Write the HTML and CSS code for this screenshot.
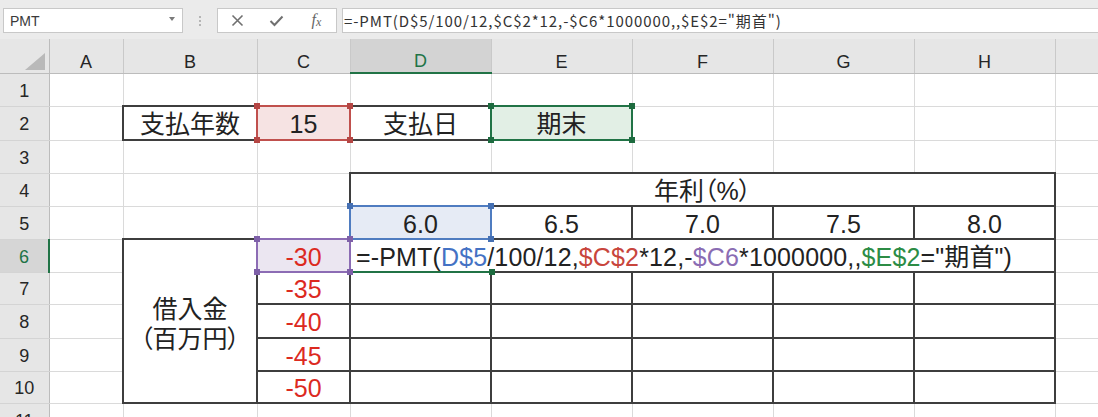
FILE: index.html
```html
<!DOCTYPE html>
<html lang="ja">
<head>
<meta charset="utf-8">
<title>PMT</title>
<link rel="stylesheet" href="styles.css">
</head>
<body>
<div class="app">
  <div class="toolbar">
    <div class="namebox"><span>PMT</span><span class="dd"></span></div>
    <div class="grip"><i></i><i></i><i></i></div>
    <div class="fbtns">
      <span class="slot"><svg width="13" height="13" viewBox="0 0 13 13"><path d="M1.5 1.5 L11.5 11.5 M11.5 1.5 L1.5 11.5" stroke="#707070" stroke-width="1.6" fill="none"/></svg></span>
      <span class="slot"><svg width="15" height="12" viewBox="0 0 15 12"><path d="M1.5 6 L5.5 10 L13.5 1.5" stroke="#707070" stroke-width="2" fill="none"/></svg></span>
      <span class="slot fx">f<span class="fxs">x</span></span>
    </div>
    <div class="finput">=-PMT(D$5/100/12,$C$2*12,-$C6*1000000,,$E$2="期首")</div>
  </div>
  <div class="sheet">
    <table class="grid">
      <colgroup>
        <col class="w-rh"><col class="w-a"><col class="w-b"><col class="w-c">
        <col class="w-d"><col class="w-d"><col class="w-d"><col class="w-d"><col class="w-d"><col class="w-d">
      </colgroup>
      <tr class="hdr">
        <th class="corner"><span class="tri"></span></th>
        <th class="ch">A</th><th class="ch">B</th><th class="ch">C</th><th class="ch sel">D</th>
        <th class="ch">E</th><th class="ch">F</th><th class="ch">G</th><th class="ch">H</th><th class="ch"></th>
      </tr>
      <tr class="r1">
        <th class="rh">1</th><td></td><td></td><td></td><td></td><td></td><td></td><td></td><td></td><td></td>
      </tr>
      <tr class="r2">
        <th class="rh">2</th><td></td>
        <td class="bx">支払年数</td>
        <td class="bx f-red">15</td>
        <td class="bx">支払日</td>
        <td class="bx f-green">期末</td>
        <td></td><td></td><td></td><td></td>
      </tr>
      <tr class="r3">
        <th class="rh">3</th><td></td><td></td><td></td><td></td><td></td><td></td><td></td><td></td><td></td>
      </tr>
      <tr class="r4">
        <th class="rh">4</th><td></td><td></td><td></td>
        <td class="bx pal" colspan="5">年利（%）</td>
        <td></td>
      </tr>
      <tr class="r5">
        <th class="rh">5</th><td></td><td></td><td></td>
        <td class="bx f-blue">6.0</td><td class="bx">6.5</td><td class="bx">7.0</td><td class="bx">7.5</td><td class="bx">8.0</td>
        <td></td>
      </tr>
      <tr class="r6">
        <th class="rh sel">6</th><td></td>
        <td class="bx pal merged" rowspan="5">借入金<br>（百万円）</td>
        <td class="bx neg f-purple">-30</td>
        <td class="bx edit" colspan="5">=-PMT(<span class="rb">D$5</span>/100/12,<span class="rr">$C$2</span>*12,-<span class="rp">$C6</span>*1000000,,<span class="rg">$E$2</span>="期首")</td>
        <td></td>
      </tr>
      <tr class="r7">
        <th class="rh">7</th><td></td>
        <td class="bx neg">-35</td>
        <td class="bx"></td><td class="bx"></td><td class="bx"></td><td class="bx"></td><td class="bx"></td>
        <td></td>
      </tr>
      <tr class="r8">
        <th class="rh">8</th><td></td>
        <td class="bx neg">-40</td>
        <td class="bx"></td><td class="bx"></td><td class="bx"></td><td class="bx"></td><td class="bx"></td>
        <td></td>
      </tr>
      <tr class="r9">
        <th class="rh">9</th><td></td>
        <td class="bx neg">-45</td>
        <td class="bx"></td><td class="bx"></td><td class="bx"></td><td class="bx"></td><td class="bx"></td>
        <td></td>
      </tr>
      <tr class="r10">
        <th class="rh">10</th><td></td>
        <td class="bx neg">-50</td>
        <td class="bx"></td><td class="bx"></td><td class="bx"></td><td class="bx"></td><td class="bx"></td>
        <td></td>
      </tr>
      <tr class="r11">
        <th class="rh">11</th><td></td><td></td><td></td><td></td><td></td><td></td><td></td><td></td><td></td>
      </tr>
    </table>

    <div class="ref active"><i class="h br"></i></div>
    <div class="ref red sel-c2"><i class="h tl"></i><i class="h tr"></i><i class="h bl"></i><i class="h br"></i></div>
    <div class="ref green sel-e2"><i class="h tl"></i><i class="h tr"></i><i class="h bl"></i><i class="h br"></i></div>
    <div class="ref blue sel-d5"><i class="h tl"></i><i class="h tr"></i><i class="h bl"></i><i class="h br"></i></div>
    <div class="ref purple sel-c6"><i class="h tl"></i><i class="h tr"></i><i class="h bl"></i><i class="h br"></i></div>
  </div>
</div>
</body>
</html>
```
FILE: styles.css
```css
html, body {
  margin: 0;
  padding: 0;
  background: #ffffff;
  overflow: hidden;
}
.app {
  width: 1098px;
  height: 417px;
  overflow: hidden;
  font-family: "Liberation Sans", "Noto Sans CJK JP", sans-serif;
}

/* ---------- formula bar ---------- */
.toolbar {
  height: 39px;
  box-sizing: border-box;
  padding-top: 8px;
  background: #ebebeb;
  display: flex;
  align-items: flex-start;
}
.namebox {
  margin-left: 3px;
  width: 180px;
  height: 25px;
  box-sizing: border-box;
  border: 1px solid #c8c8c8;
  background: #fff;
  display: flex;
  align-items: center;
  justify-content: space-between;
  padding: 0 7px 0 6px;
  font-size: 14px;
  color: #3a3a3a;
}
.dd {
  width: 0;
  height: 0;
  border-left: 3.5px solid transparent;
  border-right: 3.5px solid transparent;
  border-top: 4px solid #7a7a7a;
  margin-top: -4px;
}
.grip {
  width: 34px;
  height: 25px;
  display: flex;
  flex-direction: column;
  align-items: center;
  justify-content: center;
  gap: 2px;
}
.grip i {
  display: block;
  width: 2px;
  height: 2px;
  background: #b5b5b5;
}
.fbtns {
  width: 120px;
  height: 25px;
  box-sizing: border-box;
  border: 1px solid #c8c8c8;
  background: #fff;
  display: flex;
  align-items: center;
}
.slot {
  width: 40px;
  height: 23px;
  display: flex;
  align-items: center;
  justify-content: center;
}
.fx {
  font-family: "Liberation Serif", serif;
  font-style: italic;
  font-size: 16px;
  color: #666;
  padding-bottom: 2px;
  box-sizing: border-box;
}
.fxs {
  font-size: 12px;
  margin-top: 5px;
}
.finput {
  margin-left: 5px;
  flex: 1;
  height: 25px;
  box-sizing: border-box;
  border: 1px solid #c8c8c8;
  border-right: none;
  background: #fff;
  padding-left: 1px;
  font-family: "Noto Sans CJK JP", sans-serif;
  font-size: 15px;
  line-height: 23px;
  color: #333;
  white-space: nowrap;
  overflow: hidden;
  letter-spacing: 0.92px;
}

/* ---------- sheet ---------- */
.sheet {
  position: relative;
}
.grid {
  border-collapse: collapse;
  table-layout: fixed;
  width: 1195px;
}
.w-rh { width: 49px; }
.w-a { width: 74px; }
.w-b { width: 134px; }
.w-c { width: 93px; }
.w-d { width: 141px; }

.grid td, .grid th {
  padding: 2px 0 0;
  text-align: center;
  vertical-align: middle;
  white-space: nowrap;
  overflow: visible;
}
.grid td {
  border: 1px solid #dadada;
  font-size: 25px;
  line-height: 26px;
  color: #222;
}
.hdr { height: 34px; }
.r1 { height: 33px; }
.r2 { height: 34px; }
.r3 { height: 33px; }
.r4 { height: 33px; }
.r5 { height: 33px; }
.r6 { height: 33px; }
.r7 { height: 32px; }
.r8 { height: 34px; }
.r9 { height: 33px; }
.r10 { height: 32px; }
.r11 { height: 33px; }

.ch {
  background: #e6e6e6;
  border-top: none;
  border-left: 1px solid #c9c9c9;
  border-right: 1px solid #c9c9c9;
  border-bottom: 1px solid #bcbcbc;
  font-size: 18px;
  font-weight: normal;
  color: #262626;
  vertical-align: bottom !important;
  padding: 0 0 2px !important;
  line-height: 18px;
}
.ch.sel {
  background: #d3d3d3;
  color: #217346;
  border-bottom: 2px solid #217346;
}
.corner {
  background: #e6e6e6;
  border-right: 1px solid #bcbcbc;
  border-bottom: 1px solid #bcbcbc;
  position: relative;
}
.tri {
  position: absolute;
  right: 4px;
  bottom: 3px;
  width: 0;
  height: 0;
  border-left: 20px solid transparent;
  border-bottom: 17px solid #b9b9b9;
}
.rh {
  background: #e6e6e6;
  border-right: 1px solid #bcbcbc;
  border-bottom: 1px solid #d4d4d4;
  font-size: 18px;
  line-height: 20px;
  font-weight: normal;
  color: #262626;
}
.rh.sel {
  background: #d6d6d6;
  color: #217346;
  border-right: 2px solid #217346;
}

.grid td.bx {
  border: 2px solid #3e3e3e;
}
.pal {
  font-feature-settings: "palt";
}
.grid td.merged {
  line-height: 30px;
  padding-top: 6px;
}
.neg {
  color: #dc2a1f !important;
}
.f-red { background: #f6e3e3; }
.f-green { background: #e2efe5; }
.f-blue { background: #e6ebf5; }
.f-purple { background: #ebe6f1; }

.grid td.edit {
  text-align: left;
  padding-left: 5px;
  letter-spacing: 0.15px;
}
.rb { color: #4472c4; }
.rr { color: #c8453c; }
.rp { color: #8a6cb3; }
.rg { color: #2c8c45; }

/* ---------- reference selections (overlays) ---------- */
.ref {
  position: absolute;
  box-sizing: border-box;
  border: 2px solid transparent;
}
.ref .h {
  position: absolute;
  width: 6px;
  height: 6px;
}
.ref .tl { left: -4px; top: -4px; }
.ref .tr { right: -4px; top: -4px; }
.ref .bl { left: -4px; bottom: -4px; }
.ref .br { right: -4px; bottom: -4px; }

.red { border-color: #c0504d; }
.red .h { background: #b54644; }
.green { border-color: #217346; }
.green .h { background: #1d6b3f; }
.blue { border-color: #4f7cc0; }
.blue .h { background: #4570b3; }
.purple { border-color: #8c6cb4; }
.purple .h { background: #7e60a8; }

.sel-c2 { left: 256px; top: 66px; width: 95px; height: 36px; }
.sel-e2 { left: 490px; top: 66px; width: 143px; height: 36px; }
.sel-d5 { left: 349px; top: 166px; width: 143px; height: 35px; }
.sel-c6 { left: 256px; top: 199px; width: 95px; height: 35px; }
.active {
  left: 349px;
  top: 199px;
  width: 143px;
  height: 35px;
  border: none;
  border-bottom: 2px solid #217346;
}
.active .h { background: #1d6b3f; right: -3px; bottom: -4px; }
```
